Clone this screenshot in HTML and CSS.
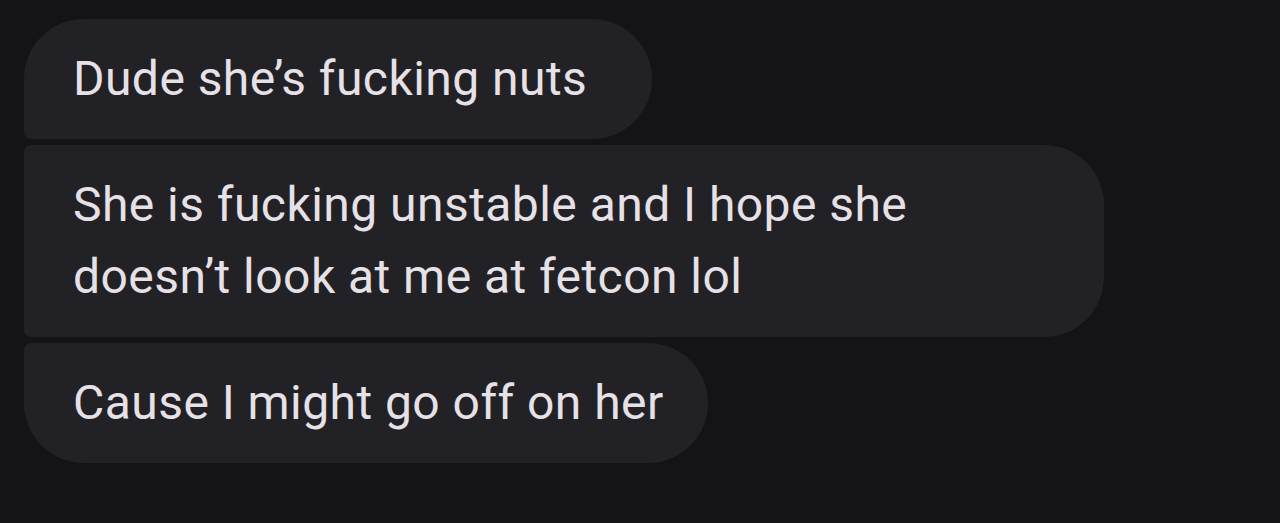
FILE: index.html
```html
<!DOCTYPE html>
<html lang="en">
<head>
<meta charset="utf-8">
<title>Messages</title>
<link rel="stylesheet" href="styles.css">
</head>
<body>
  <main class="thread">
    <div class="group">
      <div class="bubble bubble-first">Dude she’s fucking nuts</div>
      <div class="bubble bubble-middle">She is fucking unstable and I hope she<br>doesn’t look at me at fetcon lol</div>
      <div class="bubble bubble-last">Cause I might go off on her</div>
    </div>
  </main>
</body>
</html>
```

FILE: styles.css
```css
html, body {
  margin: 0;
  padding: 0;
  background: #141318;
}

body {
  width: 1280px;
  height: 523px;
  overflow: hidden;
  font-family: Roboto, "Noto Sans", "Liberation Sans", sans-serif;
}

.thread {
  padding: 19px 0 0 24px;
}

.group {
  display: flex;
  flex-direction: column;
  align-items: flex-start;
  gap: 6px;
}

.bubble {
  box-sizing: border-box;
  background: #222126;
  color: #e6e1e7;
  font-size: 48px;
  line-height: 72px;
  letter-spacing: 0.45px;
  padding: 24px 40px 24px 49px;
  border-radius: 7px 60px 60px 7px;
  white-space: nowrap;
}

.bubble-first {
  width: 628px;
  border-top-left-radius: 60px;
}

.bubble-middle {
  width: 1080px;
}

.bubble-last {
  width: 684px;
  border-bottom-left-radius: 60px;
}
```
